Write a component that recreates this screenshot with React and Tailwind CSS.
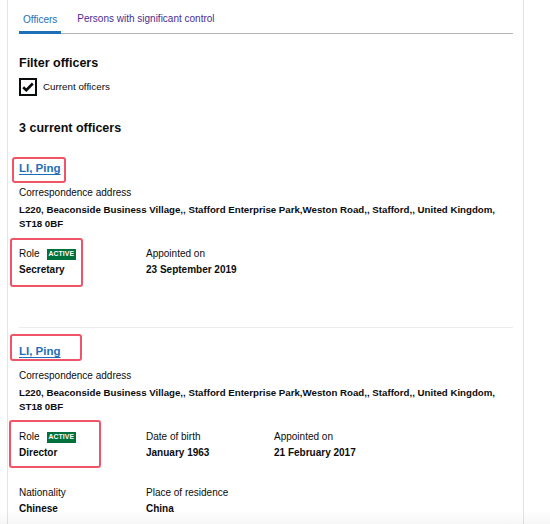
import React from 'react';

const ink = 'text-[#0b0c0c]';

const Highlight = ({ className }) => (
    <span className={`pointer-events-none absolute rounded-[3px] border-2 border-[#ef5566] ${className}`} />
);

const Tag = () => (
    <span className="inline-flex h-[11px] items-center bg-[#00703c] px-[2px] text-[6.8px] font-bold leading-none tracking-[0.1px] text-white">
        ACTIVE
    </span>
);

const Field = ({ label, value, tag }) => (
    <div>
        <div className="flex h-[14px] items-center gap-[7px] text-[10px] leading-[14px]">
            <span>{label}</span>
            {tag && <Tag />}
        </div>
        <div className="mt-[2px] text-[10px] font-bold leading-[14px]">{value}</div>
    </div>
);

const OfficerName = ({ box }) => (
    <div className="relative w-fit">
        <a
            href="#"
            className="block text-[11.5px] font-bold leading-[16px] text-[#1d70b8] underline decoration-1 underline-offset-2"
        >
            LI, Ping
        </a>
        <Highlight className={box} />
    </div>
);

const Address = () => (
    <>
        <div className="mt-[10px] text-[10px] leading-[14px]">Correspondence address</div>
        <div className="mt-[3px] text-[9.7px] font-bold leading-[14px]">
            L220, Beaconside Business Village,, Stafford Enterprise Park,Weston Road,, Stafford,, United Kingdom,
            <br />
            ST18 0BF
        </div>
    </>
);

const App = () => {
    return (
        <div
            className={`relative h-[524px] w-[550px] overflow-hidden bg-white ${ink}`}
            style={{ fontFamily: '"Liberation Sans", Arial, sans-serif' }}
        >
            <div className="ml-[7px] h-full w-[517px] border-x border-[#e4e4e4] pl-[11px] pr-[10px]">
                {/* Tabs */}
                <div className="flex h-[34px] items-end border-b border-[#b1b4b6] text-[10px] leading-[14px]">
                    <a href="#" className="-mb-px border-b-[3px] border-[#1d70b8] px-[4px] pb-[4px] text-[#1d70b8]">
                        Officers
                    </a>
                    <a href="#" className="ml-[16px] pb-[7px] text-[#4c2c92]">
                        Persons with significant control
                    </a>
                </div>

                {/* Filter */}
                <h2 className="mt-[21px] text-[12.5px] font-bold leading-[16px]">Filter officers</h2>
                <label className="mt-[7px] flex h-[18px] items-center gap-[6px] text-[9.8px]">
                    <span className="flex h-[18px] w-[18px] items-center justify-center border-2 border-[#0b0c0c] bg-white">
                        <svg width="12" height="10" viewBox="0 0 12 10" fill="none">
                            <path d="M1.2 5.2 L4.3 8.2 L10.8 1.5" stroke="#0b0c0c" strokeWidth="2.6" />
                        </svg>
                    </span>
                    Current officers
                </label>

                <h2 className="mt-[24px] text-[12.5px] font-bold leading-[16px]">3 current officers</h2>

                {/* Officer 1 */}
                <div className="mt-[24px]">
                    <OfficerName box="-left-[7px] -top-[3px] h-[26px] w-[54px]" />
                    <Address />
                    <div className="mt-[16px] grid grid-cols-[127px_128px_1fr]">
                        <div className="relative">
                            <Field label="Role" value="Secretary" tag />
                            <Highlight className="-left-[9px] -top-[9px] h-[49px] w-[73px]" />
                        </div>
                        <Field label="Appointed on" value="23 September 2019" />
                    </div>
                </div>

                <div className="mt-[50px] border-t border-[#ececec]" />

                {/* Officer 2 */}
                <div className="mt-[15px]">
                    <OfficerName box="-left-[9px] -top-[9px] h-[27px] w-[72px]" />
                    <Address />
                    <div className="mt-[16px] grid grid-cols-[127px_128px_1fr]">
                        <div className="relative">
                            <Field label="Role" value="Director" tag />
                            <Highlight className="-left-[10px] -top-[10px] h-[48px] w-[92px]" />
                        </div>
                        <Field label="Date of birth" value="January 1963" />
                        <Field label="Appointed on" value="21 February 2017" />
                    </div>
                    <div className="mt-[26px] grid grid-cols-[127px_128px_1fr]">
                        <Field label="Nationality" value="Chinese" />
                        <Field label="Place of residence" value="China" />
                    </div>
                </div>
            </div>

            {/* soft fade along the bottom edge */}
            <div className="pointer-events-none absolute inset-x-0 bottom-0 h-[14px] bg-gradient-to-b from-transparent to-black/[0.035]" />
        </div>
    );
};

export default App;
